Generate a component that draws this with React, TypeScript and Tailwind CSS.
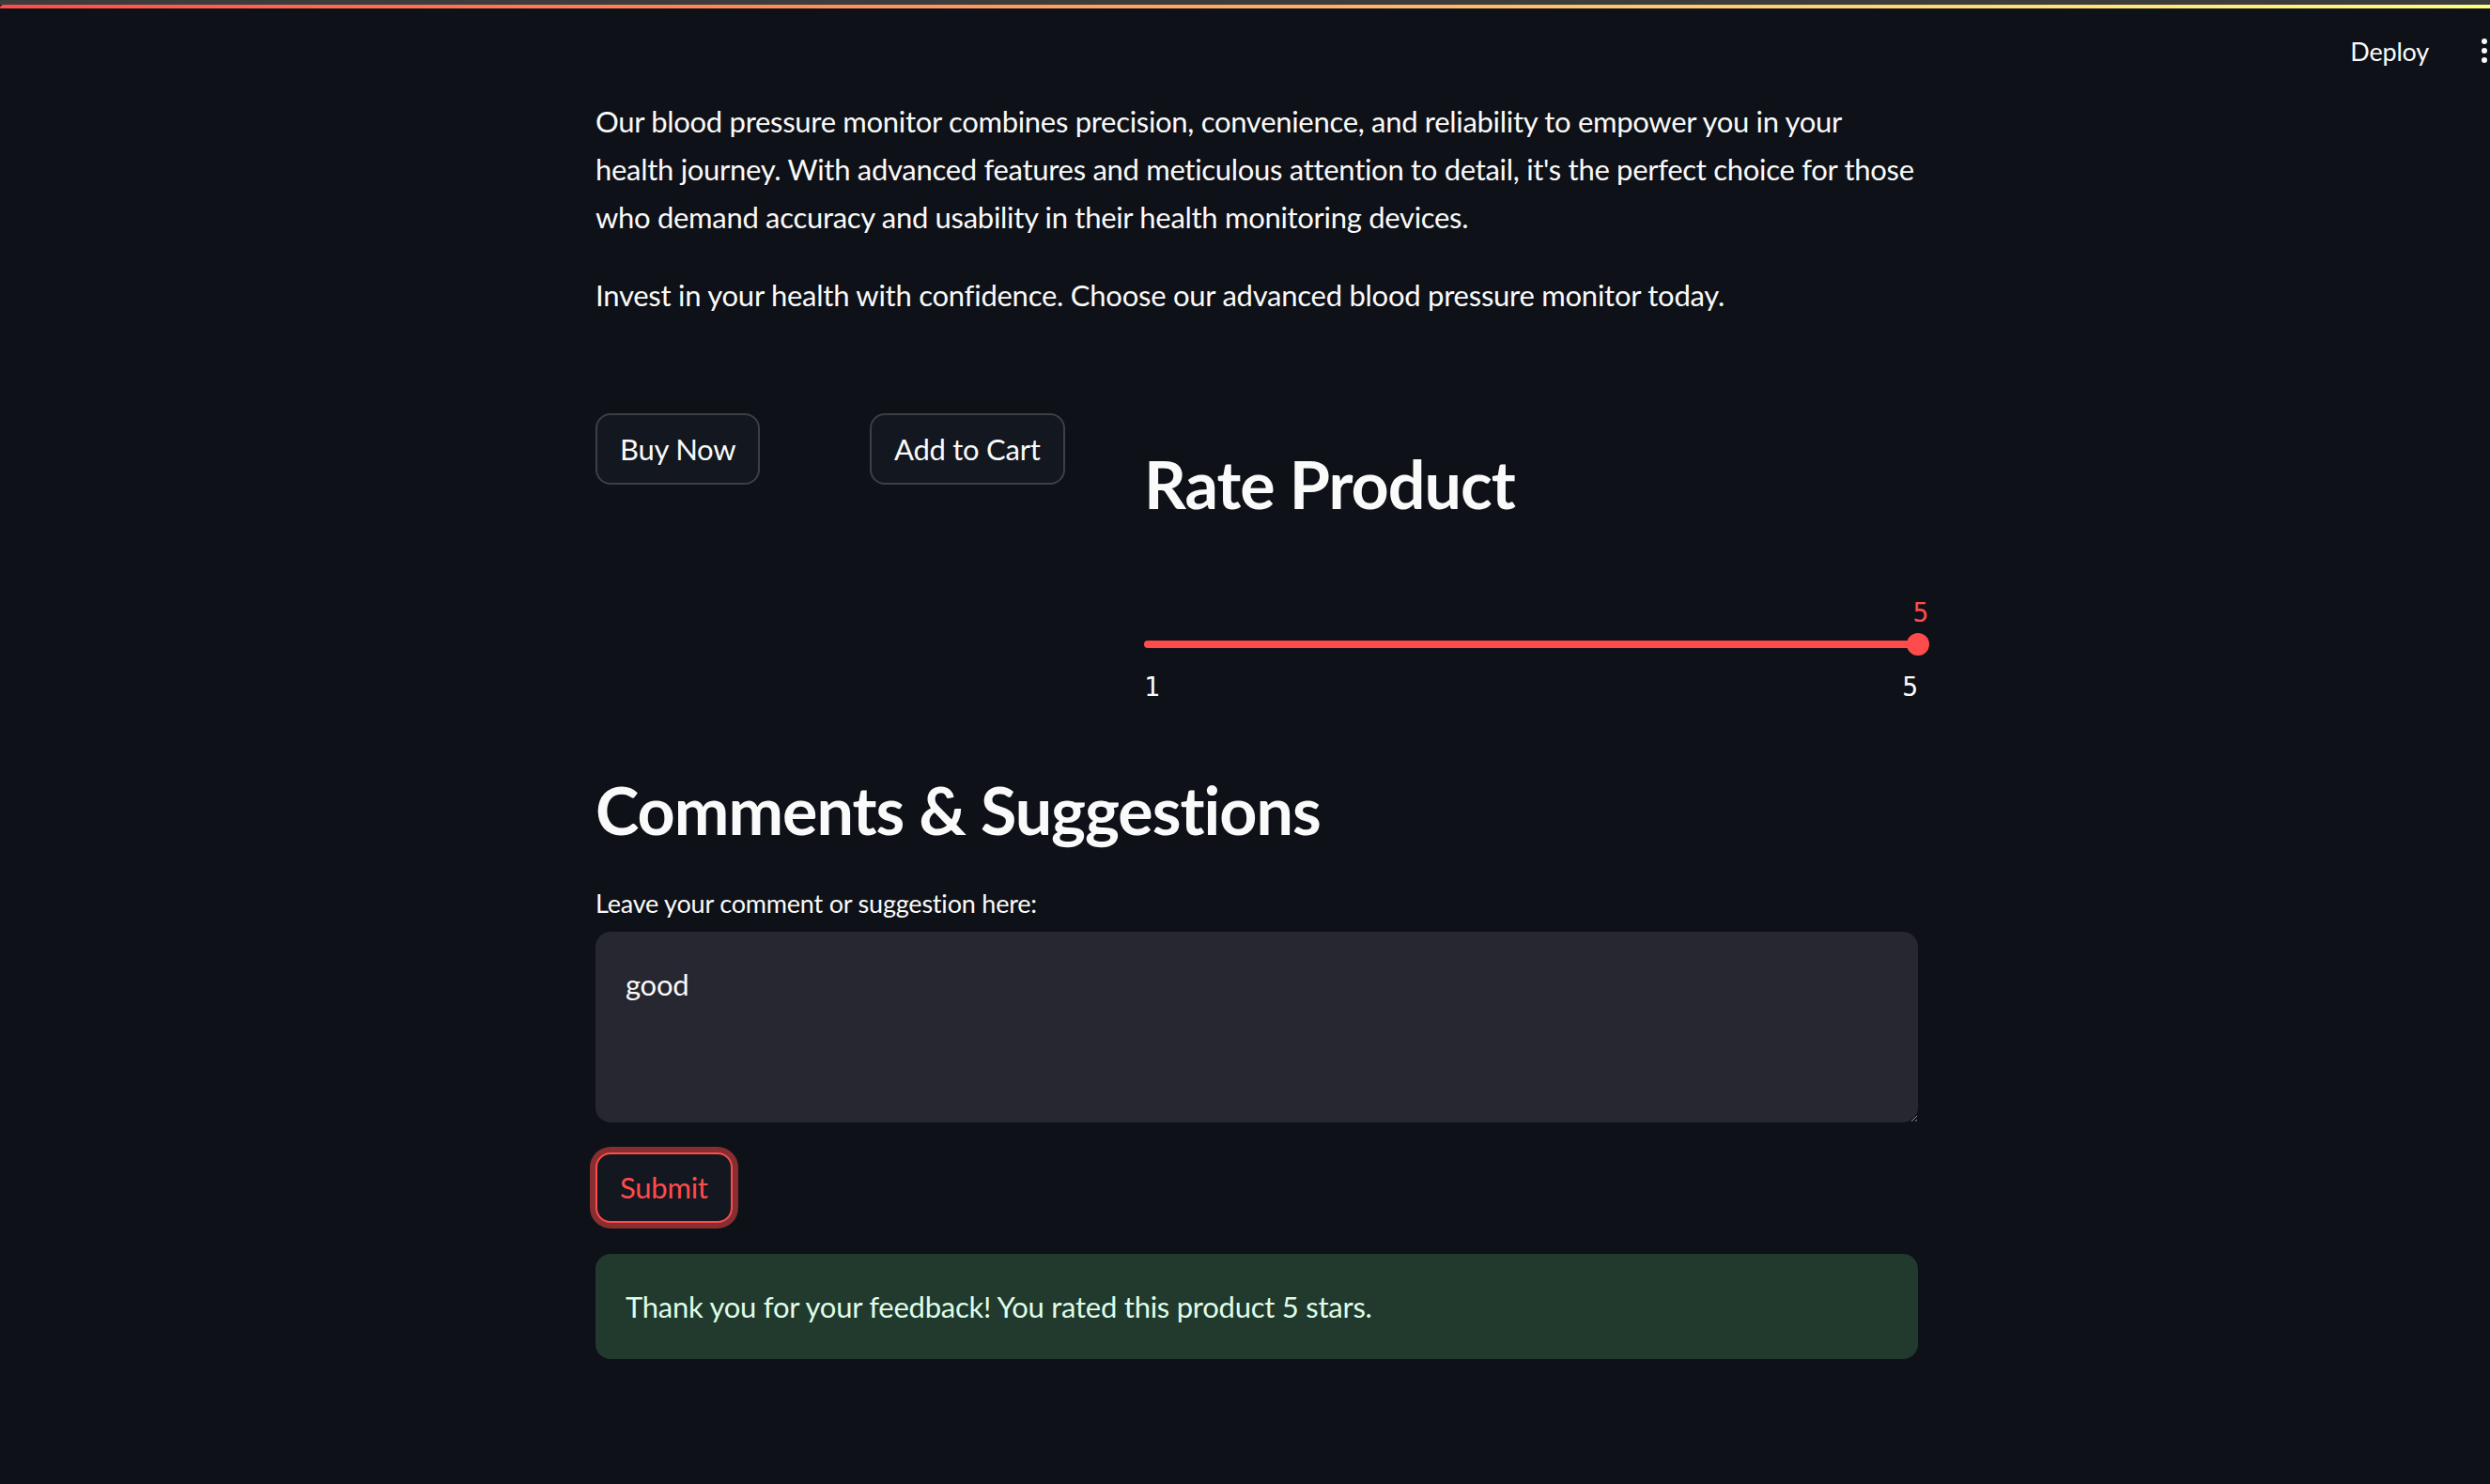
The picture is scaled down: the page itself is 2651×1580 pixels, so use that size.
import { useState } from "react";

// line breaks follow the original wrap
const PARA_1_LINES = [
  "Our blood pressure monitor combines precision, convenience, and reliability to empower you in your",
  "health journey. With advanced features and meticulous attention to detail, it's the perfect choice for those",
  "who demand accuracy and usability in their health monitoring devices.",
];
const PARA_2 = "Invest in your health with confidence. Choose our advanced blood pressure monitor today.";

function Header() {
  return (
    <>
      <div className="h-[5px] bg-[#3c3c3c]" />
      <div className="h-[4px] rounded-tl-[6px] bg-gradient-to-r from-[#ff4b4b] to-[#fffd80]" />
      <header className="flex h-[90px] items-center justify-end pr-[3px]">
        <span className="text-[27px] leading-none tracking-[-0.2px] text-[#fafafa]">Deploy</span>
        <div className="ml-[56px] flex flex-col gap-[4px]">
          <span className="size-[6px] rounded-full bg-[#fafafa]" />
          <span className="size-[6px] rounded-full bg-[#fafafa]" />
          <span className="size-[6px] rounded-full bg-[#fafafa]" />
        </div>
      </header>
    </>
  );
}

function SecondaryButton({ label }: { label: string }) {
  return (
    <button className="h-[76px] rounded-[16px] border-2 border-[#3d3f45] bg-[#131720] px-[24px] text-[31px] tracking-[-0.25px] text-[#fafafa]">
      {label}
    </button>
  );
}

function RatingSlider({ value }: { value: number }) {
  // min 1, max 5 — the value sits at the far right here
  const pct = ((value - 1) / 4) * 100;
  return (
    <div className="mt-[45px]">
      <div className="relative h-[36px]">
        <span
          className="absolute top-0 -translate-x-1/2 font-['DejaVu_Sans_Mono',monospace] text-[28px] leading-[36px] text-[#ff4b4b]"
          style={{ left: `calc(${pct}% + 3px)` }}
        >
          {value}
        </span>
      </div>
      <div className="relative mt-[3px] h-[24px]">
        <div className="absolute left-0 right-0 top-[8px] h-[8px] rounded-full bg-[#ff4b4b]" />
        <div
          className="absolute top-0 size-[24px] -translate-x-1/2 rounded-full bg-[#ff4b4b]"
          style={{ left: `${pct}%` }}
        />
      </div>
      <div className="mt-[16px] flex h-[36px] justify-between font-['DejaVu_Sans_Mono',monospace] text-[28px] leading-[36px] text-[#fafafa]">
        <span>1</span>
        <span>5</span>
      </div>
    </div>
  );
}

export default function App() {
  const [comment, setComment] = useState("good");
  const rating = 5;

  return (
    <div className="min-h-screen bg-[#0e1117] font-['Lato',sans-serif] text-[#fafafa]">
      <Header />

      <main className="ml-[634px] w-[1408px] pb-[120px]">
        <p className="mt-[5px] whitespace-nowrap text-[31px] leading-[51px] tracking-[-0.3px]">
          {PARA_1_LINES.map((line, i) => (
            <span key={i} className="block">
              {line}
            </span>
          ))}
        </p>
        <p className="mt-[32px] text-[31px] leading-[51px] tracking-[-0.25px]">{PARA_2}</p>

        <div className="mt-[100px] flex gap-[32px]">
          <div className="w-[260px] shrink-0">
            <SecondaryButton label="Buy Now" />
          </div>
          <div className="w-[260px] shrink-0">
            <SecondaryButton label="Add to Cart" />
          </div>
          <div className="flex-1">
            <h2 className="pt-[32px] pb-[32px] text-[70px] font-bold leading-[86px] tracking-[-1px]">Rate Product</h2>
            <RatingSlider value={rating} />
          </div>
        </div>

        <h2 className="mt-[69px] text-[70px] font-bold leading-[86px] tracking-[-1px]">Comments &amp; Suggestions</h2>

        <label className="mt-[39px] block text-[27px] leading-[36px] tracking-[-0.2px]">
          Leave your comment or suggestion here:
        </label>
        <textarea
          value={comment}
          onChange={(e) => setComment(e.target.value)}
          className="mt-[12px] block h-[203px] w-full rounded-[16px] bg-[#262730] px-[32px] pt-[31px] pb-[20px] text-[31px] leading-[51px] tracking-[-0.25px] text-[#fafafa] outline-none"
        />

        <button className="mt-[32px] h-[75px] rounded-[16px] border-2 border-[#ff4b4b] bg-[#131720] px-[24px] text-[31px] tracking-[-0.25px] text-[#ff4b4b] shadow-[0_0_0_6px_rgba(255,75,75,0.5)]">
          Submit
        </button>

        <div className="mt-[33px] flex h-[112px] items-center rounded-[16px] bg-[#223a2d] px-[32px] text-[31px] tracking-[-0.25px] text-[#dffde9]">
          Thank you for your feedback! You rated this product {rating} stars.
        </div>
      </main>
    </div>
  );
}
